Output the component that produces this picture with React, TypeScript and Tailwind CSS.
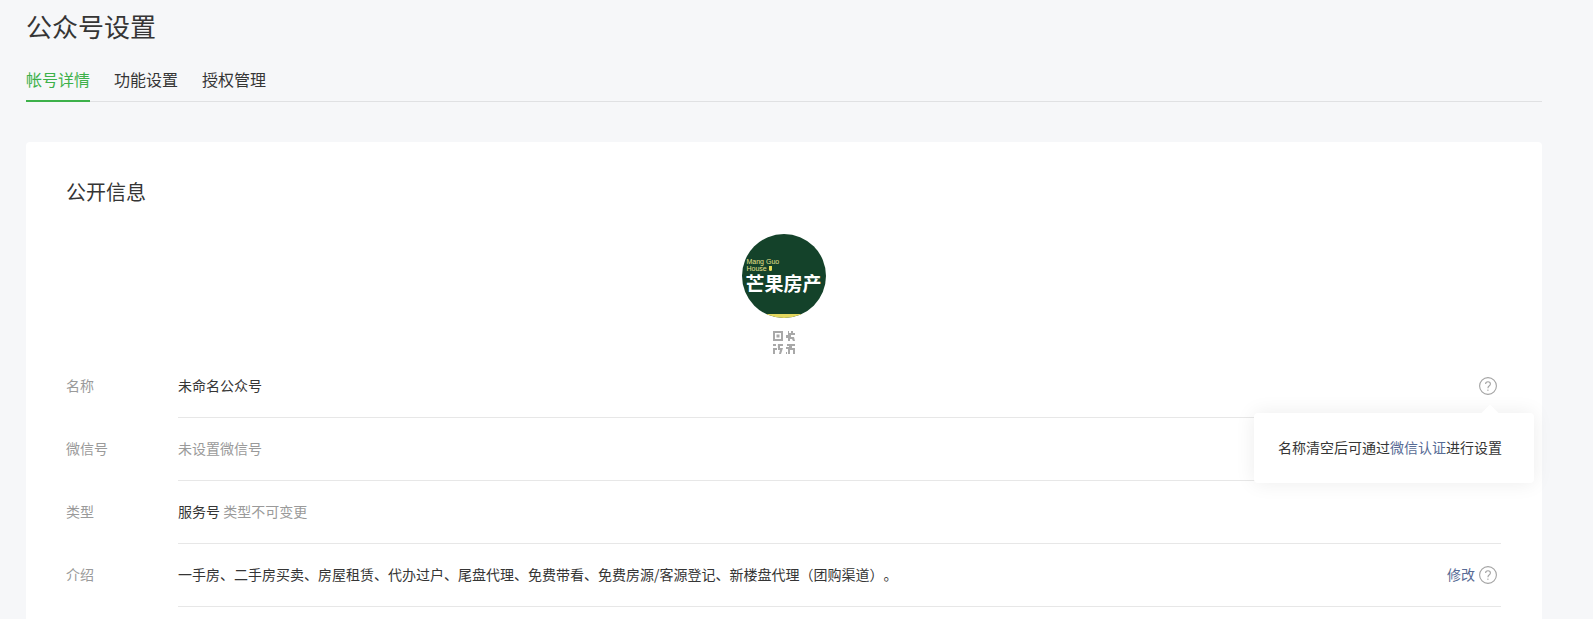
import { ReactNode } from "react";

const cjk = "font-['Microsoft_YaHei','Noto_Sans_CJK_SC','Noto_Sans',sans-serif] [text-spacing-trim:space-all]";

function HelpIcon() {
  return (
    <svg width="18" height="18" viewBox="0 0 18 18" fill="none" className="shrink-0">
      <circle cx="9" cy="9" r="8.4" stroke="#a3a3a3" strokeWidth="1.1" />
      <path d="M6.6 7.1c0-1.4 1-2.3 2.4-2.3s2.4.9 2.4 2.2c0 1-.6 1.5-1.3 2-.7.5-1.1.9-1.1 1.8v.4" stroke="#a3a3a3" strokeWidth="1.1" />
      <rect x="8.3" y="12.6" width="1.2" height="1.2" fill="#a3a3a3" />
    </svg>
  );
}

function QrIcon() {
  return (
    <svg width="24" height="24" viewBox="0 0 24 24" fill="#a8a8a8">
      <path fillRule="evenodd" d="M1 1h10v10H1V1zm2 2v6h6V3H3z" />
      <rect x="4.500" y="4.500" width="3" height="3" />
      <path d="M15 1h2v2h2V1h2v2h2v2h-4v2h3l1 4h-2l-1-2h-2v2h-2V8h-2V5h2V1z" />
      <path d="M1 14h3v2H1v-2zm5 0h5v2H8v2h3l-2 6H7l1-4H6v-2h-.1V14zM1 18h4v2H3v4H1v-6z" />
      <path d="M15 14h8v2h-3v2h3v6h-2v-4h-3v4h-2v-5h-2v-2h3v-1h-2v-2zm-1 8h1v2h-1v-2z" />
    </svg>
  );
}

function Avatar() {
  return (
    <div className="relative w-[84px] h-[84px] rounded-full overflow-hidden bg-[#14422a]">
      <div className="absolute left-[5px] top-[24px] text-[7px] leading-[7px] text-[#e6e08a] font-['Liberation_Sans',sans-serif]">
        <div>Mang Guo</div>
        <div className="flex items-center gap-[2px]">
          House
          <span className="w-[3px] h-[5px] rounded-b-full bg-[#e6dc5a]" />
        </div>
      </div>
      <div className={`absolute left-0 right-0 top-[38px] text-center text-[19px] leading-[22px] font-bold text-white ${cjk}`}>
        芒果房产
      </div>
      <div className="absolute left-0 right-0 bottom-0 h-[4px] bg-[#e3d75e]" />
    </div>
  );
}

function Row({ label, children, right }: { label: string; children: ReactNode; right?: ReactNode }) {
  return (
    <div className="flex">
      <div className="w-[112px] shrink-0 pt-[20px] text-[14px] leading-[20px] text-[#9a9a9a]">{label}</div>
      <div className="flex-1 flex items-start justify-between h-[63px] pt-[20px] pr-[4px] border-b border-[#e7e7e7] text-[14px] leading-[20px] text-[#353535]">
        <div>{children}</div>
        {right}
      </div>
    </div>
  );
}

export default function App() {
  return (
    <div className={`relative h-[619px] overflow-hidden bg-[#f6f7f9] ${cjk}`}>
      <div className="w-[1516px] ml-[26px]">
        <h1 className="pt-[8px] text-[26px] leading-[36px] text-[#353535]">公众号设置</h1>

        {/* tabs */}
        <div className="flex gap-6 mt-[20px] h-[38px] border-b border-[#e0e1e3] text-[16px] leading-[24px] text-[#353535]">
          <div className="h-[38px] pt-[3px] border-b-2 border-[#3db14a] text-[#3db14a]">帐号详情</div>
          <div className="pt-[3px]">功能设置</div>
          <div className="pt-[3px]">授权管理</div>
        </div>

        {/* card */}
        <div className="mt-[40px] rounded bg-white pl-[40px] pr-[41px] pt-[36px] h-[600px]">
          <h2 className="text-[20px] leading-[28px] text-[#353535]">公开信息</h2>
          <div className="flex flex-col items-center mt-[28px]">
            <Avatar />
            <div className="mt-[12px]">
              <QrIcon />
            </div>
          </div>
          <div className="mt-[1px]">
            <Row label="名称" right={<div className="pt-[2px]"><HelpIcon /></div>}>
              未命名公众号
            </Row>
            <Row label="微信号">
              <span className="text-[#9a9a9a]">未设置微信号</span>
            </Row>
            <Row label="类型">
              服务号 <span className="text-[#9a9a9a]">类型不可变更</span>
            </Row>
            <Row
              label="介绍"
              right={
                <div className="flex items-start gap-1">
                  <a className="text-[#576b95]">修改</a>
                  <div className="pt-[2px]">
                    <HelpIcon />
                  </div>
                </div>
              }
            >
              一手房、二手房买卖、房屋租赁、代办过户、尾盘代理、免费带看、免费房源/客源登记、新楼盘代理（团购渠道）。
            </Row>
          </div>
        </div>
      </div>

      {/* popover */}
      <div className="absolute left-[1254px] top-[413px] w-[280px] h-[70px] flex items-center justify-end pr-[32px] pb-[2px] rounded-sm bg-white shadow-[0_0_20px_rgba(0,0,0,0.08)] text-[14px] text-[#353535]">
        <span>
          名称清空后可通过<a className="text-[#576b95]">微信认证</a>进行设置
        </span>
        <div className="absolute left-[230px] top-[-6px] w-[12px] h-[12px] rotate-45 bg-white" />
      </div>
    </div>
  );
}
